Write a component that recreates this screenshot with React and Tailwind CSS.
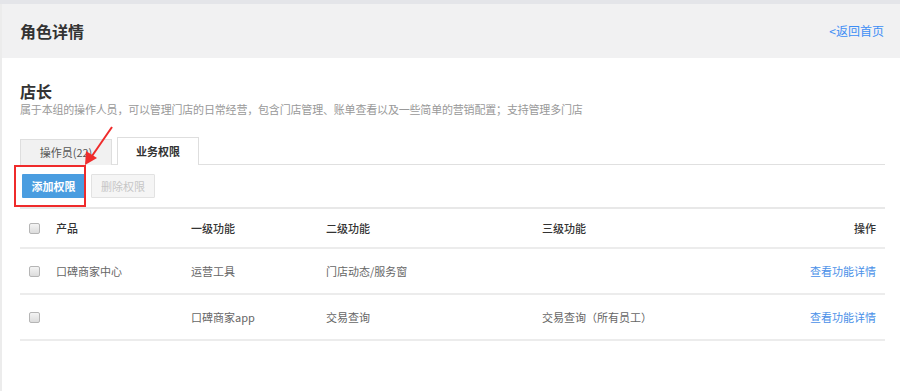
import React from "react";

const font = { fontFamily: '"Noto Sans CJK SC", "Liberation Sans", sans-serif' };

function Checkbox() {
  return <span className="block w-[11px] h-[11px] rounded-[2px] border border-[#b5b5b5] bg-gradient-to-b from-[#f4f4f4] to-[#dcdcdc]" />;
}

const rows = [
  { product: "口碑商家中心", l1: "运营工具", l2: "门店动态/服务窗", l3: "" },
  { product: "", l1: "口碑商家app", l2: "交易查询", l3: "交易查询（所有员工）" },
];

export default function App() {
  return (
    <div className="w-[900px] h-[391px] bg-white relative overflow-hidden" style={font}>
      <div className="h-[4px] bg-[#e4e5e9]" />
      <div className="border-l-2 border-[#ececec] h-[387px]">
        {/* 页头 */}
        <div className="h-[54px] bg-[#f1f1f2] flex items-center justify-between pl-[18px] pr-[16px]">
          <h1 className="text-[16px] leading-5 font-bold text-[#333]">角色详情</h1>
          <a className="text-[12px] text-[#3d8ef5]">&lt;返回首页</a>
        </div>

        <div className="pl-[18px] pr-[15px] pt-[23px]">
          <h2 className="text-[16px] leading-5 font-bold text-[#333]">店长</h2>
          <p className="text-[11px] leading-4 text-[#999] tracking-[-0.18px]">
            属于本组的操作人员，可以管理门店的日常经营，包含门店管理、账单查看以及一些简单的营销配置；支持管理多门店
          </p>

          {/* 标签 */}
          <div className="mt-[20px] flex items-end gap-[5px] border-b border-[#e0e0e0] h-[28px]">
            <button className="h-[26px] w-[92px] bg-[#f1f1f1] border border-b-0 border-[#dedede] text-[11px] text-[#555] -mb-px">
              操作员(22)
            </button>
            <button className="h-[28px] w-[82px] bg-white border border-b-0 border-[#dedede] text-[11px] font-semibold text-[#333] -mb-px pb-px">
              业务权限
            </button>
          </div>

          {/* 按钮 */}
          <div className="flex gap-[6px] pt-[9px] pb-[9px] pl-[2px] border-b-2 border-[#e8e8e8]">
            <button className="h-[24px] w-[63px] bg-[#4a9de0] text-white text-[11px] font-bold rounded-[1px]">添加权限</button>
            <button className="h-[24px] w-[64px] bg-[#f5f5f5] border border-[#e2e2e2] text-[#c6c6c6] text-[11px] rounded-[1px]">删除权限</button>
          </div>

          {/* 表格 */}
          <div className="text-[11px]">
            <div className="grid grid-cols-[27px_135px_135px_216px_1fr_auto] items-center h-[40px] border-b-2 border-[#ececec] pl-[9px] pr-[9px] font-medium text-[#333]">
              <Checkbox />
              <span>产品</span>
              <span>一级功能</span>
              <span>二级功能</span>
              <span>三级功能</span>
              <span>操作</span>
            </div>
            {rows.map((r, i) => (
              <div key={i} className="grid grid-cols-[27px_135px_135px_216px_1fr_auto] items-center h-[46px] border-b-2 border-[#ececec] pl-[9px] pr-[9px] text-[#666]">
                <Checkbox />
                <span>{r.product}</span>
                <span>{r.l1}</span>
                <span>{r.l2}</span>
                <span>{r.l3}</span>
                <a className="text-[#4a90e8]">查看功能详情</a>
              </div>
            ))}
          </div>
        </div>
      </div>

      {/* 标注 */}
      <div className="absolute left-[14px] top-[165px] w-[72px] h-[42px] border-2 border-[#ef2b2b]" />
      <svg className="absolute left-0 top-0" width="900" height="391">
        <line x1="112" y1="127" x2="92" y2="156" stroke="#ef2b2b" strokeWidth="2" />
        <polygon points="85,165 86,151 97,158" fill="#ef2b2b" />
      </svg>
    </div>
  );
}
